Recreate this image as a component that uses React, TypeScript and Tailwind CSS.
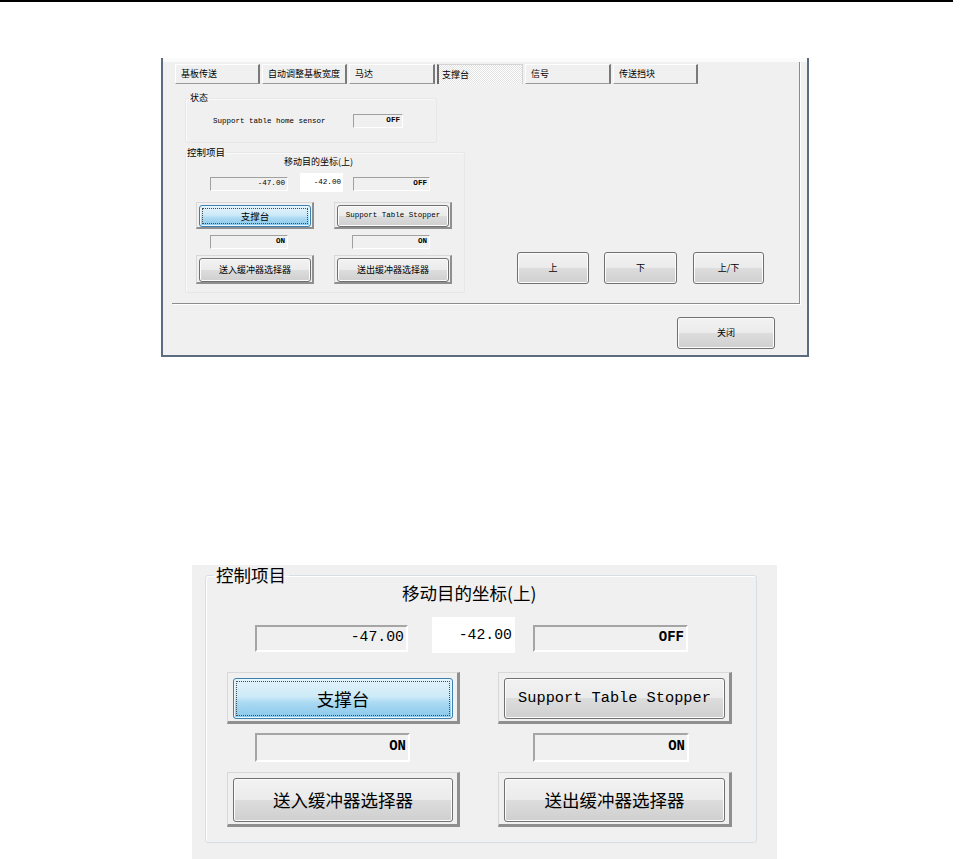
import React from "react";

const cjk = "font-['Noto_Sans_CJK_SC','Noto_Sans',sans-serif]";
const mono = "font-['Liberation_Mono',monospace]";

const grayBtn =
  "bg-[linear-gradient(#f2f2f2_0%,#ebebeb_50%,#dddddd_50%,#cfcfcf_100%)] border border-[#707070] rounded-[3px] shadow-[inset_0_0_0_1px_#fcfcfc] flex items-center justify-center text-black";
const blueBtn =
  "bg-[linear-gradient(#e4f3fb_0%,#cdeaf8_45%,#acdaf3_60%,#88c7ea_100%)] border border-[#3c7fb1] rounded-[3px] shadow-[inset_0_0_0_1px_#e8f6fd] flex p-[2px]";
const sunkenS =
  "border-t border-l border-t-[#a0a0a0] border-l-[#a0a0a0] border-r border-b border-r-white border-b-white bg-[#f0f0f0] flex items-center justify-end pr-[2px]";
const sunkenL =
  "border-t-2 border-l-2 border-t-[#a5a5a5] border-l-[#a5a5a5] border-r-2 border-b-2 border-r-white border-b-white bg-[#f0f0f0] flex items-center justify-end pr-[2px] pb-[2px]";
const frameS =
  "border-t border-l border-t-[#d8d8d8] border-l-[#d8d8d8] border-r-2 border-b-2 border-r-[#8f8f8f] border-b-[#8f8f8f] pl-[2px] pt-[2px] pr-[1px] flex";
const frameL =
  "border-t border-l border-t-[#d8d8d8] border-l-[#d8d8d8] border-r-[3px] border-b-[3px] border-r-[#8f8f8f] border-b-[#8f8f8f] pl-[5px] pt-[5px] pr-[4px] pb-[2px] flex";

function Tab({ label, w, active }: { label: string; w: string; active?: boolean }) {
  if (active) {
    return (
      <div
        className={`${w} h-[20px] flex items-center pl-[3px] text-[9px] leading-[10px] border-l-2 border-l-[#6a6a6a] border-t border-t-[#d4d4d4] border-r border-r-[#d4d4d4] [background-image:repeating-conic-gradient(#ffffff_0_25%,#e2e2e2_0_50%)] [background-size:2px_2px]`}
      >
        {label}
      </div>
    );
  }
  return (
    <div
      className={`${w} h-[20px] flex items-center pl-[5px] text-[9px] leading-[10px] border-t border-l border-t-white border-l-white border-r-2 border-r-[#7a7a7a] border-b border-b-[#9a9a9a]`}
    >
      {label}
    </div>
  );
}

export default function App() {
  return (
    <div className={`w-[970px] h-[859px] bg-white overflow-hidden text-black ${cjk}`}>
      <div className="w-[953px] h-[2px] bg-black" />

      {/* small window */}
      <div className="ml-[161px] mt-[56px] w-[648px] h-[299px] bg-[#f0f0f0] border-l-2 border-r-2 border-b-2 border-[#5c6c80] flex flex-col">
        <div className="h-[4px] bg-[#fbfbfb]" />
        <div className="ml-[9px] w-[628px] h-[242px] border-r border-b border-[#8c8c8c] shadow-[1px_1px_0_#ffffff] flex flex-col">
          <div className="flex gap-[2px] pl-[3px] pt-[2px]">
            <Tab label="基板传送" w="w-[85px]" />
            <Tab label="自动调整基板宽度" w="w-[85px]" />
            <Tab label="马达" w="w-[86px]" />
            <Tab label="支撑台" w="w-[86px]" active />
            <Tab label="信号" w="w-[86px]" />
            <Tab label="传送挡块" w="w-[85px]" />
          </div>
          <div className="flex">
            <div className="ml-[13px] w-[280px] flex flex-col">
              <fieldset className="mt-[9px] w-[252px] h-[50px] border border-[#e7e7e7] rounded-[2px] shadow-[inset_1px_1px_0_#fafafa]">
                <legend className="ml-[3px] px-[1px] text-[9px] leading-[10px]">状态</legend>
                <div className="flex items-center mt-[11px] ml-[27px]">
                  <div className={`w-[140px] text-[7.5px] leading-[10px] ${mono}`}>Support table home sensor</div>
                  <div className={`w-[50px] h-[14px] ${sunkenS} ${mono} text-[7.6px] font-bold`}>OFF</div>
                </div>
              </fieldset>
              <fieldset className="mt-[4px] w-[280px] h-[146px] border border-[#e7e7e7] rounded-[2px] shadow-[inset_1px_1px_0_#fafafa]">
                <legend className="px-[1px] text-[9.5px] leading-[10px]">控制项目</legend>
                <div className="ml-[98px] text-[9px] leading-[10px]">移动目的坐标(上)</div>
                <div className="flex items-end h-[19px] mt-[6px]">
                  <div className={`ml-[24px] w-[78px] h-[14px] mb-[1px] ${sunkenS} ${mono} text-[7.6px]`}>-47.00</div>
                  <div className={`ml-[12px] w-[43px] h-[19px] bg-white flex items-center justify-end pr-[2px] ${mono} text-[7.6px]`}>-42.00</div>
                  <div className={`ml-[10px] w-[77px] h-[14px] mb-[1px] ${sunkenS} ${mono} text-[7.6px] font-bold`}>OFF</div>
                </div>
                <div className="flex mt-[10px]">
                  <div className={`ml-[10px] w-[118px] h-[27px] ${frameS}`}>
                    <div className={`flex-1 ${blueBtn}`}>
                      <div className="flex-1 border border-dotted border-[#4a4a4a] flex items-center justify-center text-[9.5px] leading-[10px]">支撑台</div>
                    </div>
                  </div>
                  <div className={`ml-[20px] w-[118px] h-[27px] ${frameS}`}>
                    <div className={`flex-1 ${grayBtn} ${mono} text-[7.5px]`}>Support Table Stopper</div>
                  </div>
                </div>
                <div className="flex mt-[6px]">
                  <div className={`ml-[24px] w-[78px] h-[14px] ${sunkenS} ${mono} text-[7.6px] font-bold`}>ON</div>
                  <div className={`ml-[64px] w-[78px] h-[14px] ${sunkenS} ${mono} text-[7.6px] font-bold`}>ON</div>
                </div>
                <div className="flex mt-[6px]">
                  <div className={`ml-[10px] w-[118px] h-[29px] ${frameS}`}>
                    <div className={`flex-1 ${grayBtn} text-[9px]`}>送入缓冲器选择器</div>
                  </div>
                  <div className={`ml-[20px] w-[118px] h-[29px] ${frameS}`}>
                    <div className={`flex-1 ${grayBtn} text-[9px]`}>送出缓冲器选择器</div>
                  </div>
                </div>
              </fieldset>
            </div>
            <div className="ml-[52px] mt-[168px] flex">
              <div className={`w-[72px] h-[32px] ${grayBtn} text-[9px]`}>上</div>
              <div className={`ml-[15px] w-[73px] h-[32px] ${grayBtn} text-[9px]`}>下</div>
              <div className={`ml-[16px] w-[71px] h-[32px] ${grayBtn} text-[9px]`}>上/下</div>
            </div>
          </div>
        </div>
        <div className={`ml-[514px] mt-[13px] w-[98px] h-[32px] ${grayBtn} text-[9px]`}>关闭</div>
      </div>

      {/* enlarged group */}
      <div className="ml-[192px] mt-[208px] w-[585px] h-[294px] bg-[#f0f0f0] flex flex-col">
        <fieldset className="ml-[13px] w-[552px] h-[278px] border border-[#d5dfe5] rounded-[3px] shadow-[inset_1px_1px_0_#ffffff]">
          <legend className="ml-[7px] px-[3px] text-[17.5px] leading-[20px]">控制项目</legend>
          <div className="-mt-[2px] ml-[196px] text-[17.5px] leading-[20px]">移动目的坐标(上)</div>
          <div className="flex items-end h-[36px] mt-[14px]">
            <div className={`ml-[49px] w-[153px] h-[27px] mb-[1px] ${sunkenL} ${mono} text-[14.8px]`}>-47.00</div>
            <div className={`ml-[24px] w-[83px] h-[36px] bg-white flex items-center justify-end pr-[3px] ${mono} text-[14.8px]`}>-42.00</div>
            <div className={`ml-[18px] w-[155px] h-[27px] mb-[1px] ${sunkenL} ${mono} text-[14px] font-bold`}>OFF</div>
          </div>
          <div className="flex mt-[19px]">
            <div className={`ml-[21px] w-[233px] h-[52px] ${frameL}`}>
              <div className={`flex-1 ${blueBtn}`}>
                <div className="flex-1 border border-dotted border-[#4a4a4a] flex items-center justify-center text-[17.5px] leading-[20px]">支撑台</div>
              </div>
            </div>
            <div className={`ml-[38px] w-[234px] h-[52px] ${frameL}`}>
              <div className={`flex-1 ${grayBtn} ${mono} text-[15.3px]`}>Support Table Stopper</div>
            </div>
          </div>
          <div className="flex mt-[9px]">
            <div className={`ml-[49px] w-[155px] h-[29px] ${sunkenL} ${mono} text-[14px] font-bold`}>ON</div>
            <div className={`ml-[123px] w-[156px] h-[29px] ${sunkenL} ${mono} text-[14px] font-bold`}>ON</div>
          </div>
          <div className="flex mt-[10px]">
            <div className={`ml-[21px] w-[233px] h-[55px] ${frameL}`}>
              <div className={`flex-1 ${grayBtn} text-[17.5px]`}>送入缓冲器选择器</div>
            </div>
            <div className={`ml-[38px] w-[234px] h-[55px] ${frameL}`}>
              <div className={`flex-1 ${grayBtn} text-[17.5px]`}>送出缓冲器选择器</div>
            </div>
          </div>
        </fieldset>
      </div>
    </div>
  );
}
